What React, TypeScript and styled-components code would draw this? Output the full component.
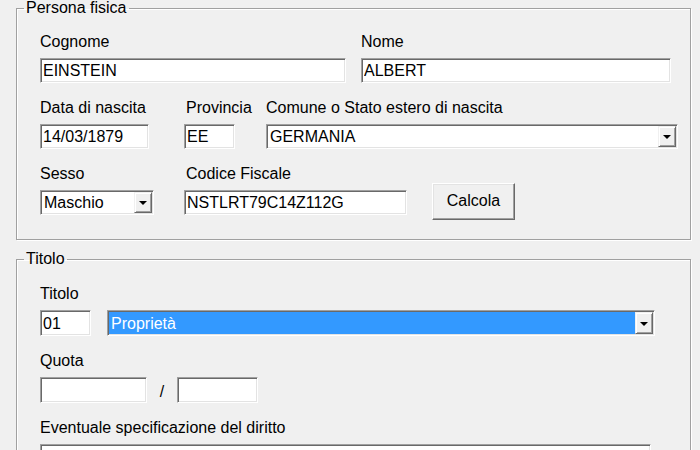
import React from 'react';
import styled, { createGlobalStyle } from 'styled-components';

const GlobalStyle = createGlobalStyle`
  html, body {
    margin: 0;
    padding: 0;
    background: #f0f0f0;
    overflow: hidden;
  }
  body {
    font-family: "Liberation Sans", Arial, sans-serif;
    font-size: 16px;
    color: #000;
  }
`;

const Page = styled.div`
  padding: 0 9px 0 16px;
`;

const Group = styled.fieldset<{ $top?: number }>`
  margin: ${p => p.$top || 0}px 0 0 0;
  padding: 0;
  min-width: 0;
  border: 1px solid #a0a0a0;
  box-shadow: inset 1px 1px 0 #fff, 1px 1px 0 #fff;
`;

const Legend = styled.legend`
  margin-left: 7px;
  padding: 0 2px;
  font-size: 16px;
  line-height: 16px;
`;

const GroupBody = styled.div<{ $pt: number }>`
  display: flex;
  flex-direction: column;
  gap: 16px;
  padding: ${p => p.$pt}px 0 24px 23px;
`;

const Row = styled.div`
  display: flex;
  align-items: flex-end;
`;

const Field = styled.div<{ $w?: number; $ml?: number }>`
  display: flex;
  flex-direction: column;
  width: ${p => (p.$w ? `${p.$w}px` : 'auto')};
  margin-left: ${p => p.$ml || 0}px;
`;

const Label = styled.div<{ $indent?: number }>`
  line-height: 18px;
  margin-bottom: 7px;
  padding-left: ${p => p.$indent || 0}px;
  white-space: nowrap;
`;

const TextBox = styled.input<{ $w?: number; $h?: number }>`
  box-sizing: border-box;
  width: ${p => (p.$w ? `${p.$w}px` : '100%')};
  height: ${p => p.$h || 25}px;
  margin: 0;
  padding: 1px 2px 0;
  font: inherit;
  color: #000;
  background: #fff;
  border: 1px solid;
  border-color: #a0a0a0 #fff #fff #a0a0a0;
  box-shadow: inset 1px 1px 0 #696969, inset -1px -1px 0 #e3e3e3;
  outline: none;
`;

const Combo = styled.div<{ $w?: number; $h?: number; $ml?: number }>`
  box-sizing: border-box;
  display: flex;
  width: ${p => (p.$w ? `${p.$w}px` : '100%')};
  height: ${p => p.$h || 25}px;
  margin-left: ${p => p.$ml || 0}px;
  background: #fff;
  border: 1px solid;
  border-color: #a0a0a0 #fff #fff #a0a0a0;
  box-shadow: inset 1px 1px 0 #696969, inset -1px -1px 0 #e3e3e3;
  padding: 1px;
`;

const ComboValue = styled.div<{ $selected?: boolean }>`
  flex: 1;
  display: flex;
  align-items: center;
  padding: 1px 2px 0;
  white-space: nowrap;
  overflow: hidden;
  background: ${p => (p.$selected ? '#3399ff' : 'transparent')};
  color: ${p => (p.$selected ? '#fff' : '#000')};
`;

const DropButton = styled.div`
  box-sizing: border-box;
  width: 18px;
  display: flex;
  align-items: center;
  justify-content: center;
  background: #f0f0f0;
  border: 1px solid;
  border-color: #f0f0f0 #696969 #696969 #f0f0f0;
  box-shadow: inset 1px 1px 0 #fff, inset -1px -1px 0 #a0a0a0;

  &::after {
    content: '';
    width: 0;
    height: 0;
    border-left: 4px solid transparent;
    border-right: 4px solid transparent;
    border-top: 4px solid #000;
    margin-top: 1px;
  }
`;

const PushButton = styled.button<{ $ml?: number }>`
  box-sizing: border-box;
  width: 83px;
  height: 37px;
  margin: 0 0 -5px ${p => p.$ml || 0}px;
  padding: 0 0 1px 0;
  font: inherit;
  color: #000;
  background: #f0f0f0;
  border: 1px solid;
  border-color: #fff #696969 #696969 #fff;
  box-shadow: inset -1px -1px 0 #a0a0a0, inset 1px 1px 0 #e3e3e3;
`;

const Slash = styled.span`
  width: 30px;
  height: 26px;
  text-align: center;
  line-height: 30px;
`;

const ComboBox = ({ value, w, h, ml, selected }: { value: string; w: number; h?: number; ml?: number; selected?: boolean }) => (
  <Combo $w={w} $h={h} $ml={ml}>
    <ComboValue $selected={selected}>{value}</ComboValue>
    <DropButton />
  </Combo>
);

export default function App() {
  return (
    <Page>
      <GlobalStyle />
      <Group>
        <Legend>Persona fisica</Legend>
        <GroupBody $pt={17}>
          <Row>
            <Field $w={306}>
              <Label>Cognome</Label>
              <TextBox readOnly value="EINSTEIN" />
            </Field>
            <Field $w={310} $ml={15}>
              <Label>Nome</Label>
              <TextBox readOnly value="ALBERT" />
            </Field>
          </Row>
          <Row>
            <Field $w={109}>
              <Label>Data di nascita</Label>
              <TextBox readOnly value="14/03/1879" />
            </Field>
            <Field $w={51} $ml={35}>
              <Label $indent={2}>Provincia</Label>
              <TextBox readOnly value="EE" />
            </Field>
            <Field $w={412} $ml={31}>
              <Label>Comune o Stato estero di nascita</Label>
              <ComboBox value="GERMANIA" w={412} />
            </Field>
          </Row>
          <Row>
            <Field $w={114}>
              <Label>Sesso</Label>
              <ComboBox value="Maschio" w={114} />
            </Field>
            <Field $w={223} $ml={30}>
              <Label $indent={2}>Codice Fiscale</Label>
              <TextBox readOnly value="NSTLRT79C14Z112G" />
            </Field>
            <PushButton $ml={25}>Calcola</PushButton>
          </Row>
        </GroupBody>
      </Group>

      <Group $top={11}>
        <Legend>Titolo</Legend>
        <GroupBody $pt={18}>
          <Field>
            <Label>Titolo</Label>
            <Row>
              <TextBox readOnly value="01" $w={51} $h={26} />
              <ComboBox value="Proprietà" w={548} h={26} ml={16} selected />
            </Row>
          </Field>
          <Field>
            <Label>Quota</Label>
            <Row>
              <TextBox readOnly value="" $w={107} $h={26} />
              <Slash>/</Slash>
              <TextBox readOnly value="" $w={81} $h={26} />
            </Row>
          </Field>
          <Field>
            <Label>Eventuale specificazione del diritto</Label>
            <TextBox readOnly value="" $w={611} $h={26} />
          </Field>
        </GroupBody>
      </Group>
    </Page>
  );
}
